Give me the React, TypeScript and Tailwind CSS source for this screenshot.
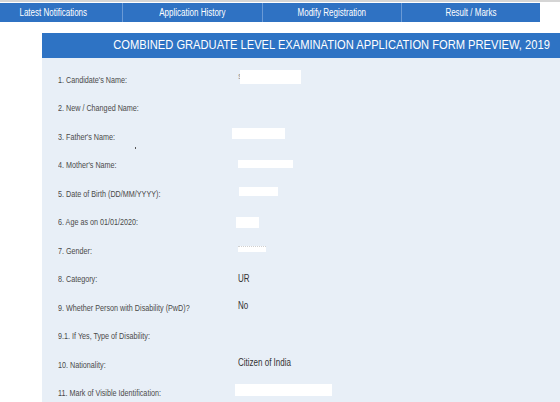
import type { ReactNode } from 'react';

const font = { fontFamily: '"Liberation Sans", Arial, sans-serif' };

const tabs = ['Latest Notifications', 'Application History', 'Modify Registration', 'Result / Marks'];

// The source page renders in a narrow face; squeeze Arial-width text to match.
function Narrow({ children, className = '' }: { children: ReactNode; className?: string }) {
  return <span className={`inline-block whitespace-nowrap scale-x-[0.8] ${className}`}>{children}</span>;
}

function Redacted({ className }: { className: string }) {
  return <span className={`block bg-white ${className}`} />;
}

function Value({ children, className = '' }: { children: ReactNode; className?: string }) {
  return <Narrow className={`origin-left text-[10px] text-[#333] ${className}`}>{children}</Narrow>;
}

const rows: { label: string; value?: ReactNode; extra?: ReactNode }[] = [
  {
    label: "1. Candidate's Name:",
    value: (
      <span className="flex items-center mb-[6px]">
        <span className="text-[8px] leading-none text-[#888]">S</span>
        <Redacted className="ml-[-3px] w-[61px] h-[14px]" />
      </span>
    ),
  },
  { label: '2. New / Changed Name:' },
  {
    label: "3. Father's Name:",
    value: <Redacted className="ml-[-6px] w-[53px] h-[11px] mb-[8px]" />,
    extra: <span className="absolute left-[77px] top-[24px] w-px h-[2px] bg-[#555]" />,
  },
  { label: "4. Mother's Name:", value: <Redacted className="w-[55px] h-[8px] mb-[4px]" /> },
  { label: '5. Date of Birth (DD/MM/YYYY):', value: <Redacted className="ml-px w-[39px] h-[9px] mb-[5px]" /> },
  { label: '6. Age as on 01/01/2020:', value: <Redacted className="ml-[-2px] w-[23px] h-[11px]" /> },
  {
    label: '7. Gender:',
    value: <Redacted className="w-[28px] h-[6px] mb-[4px] border-t border-[#d0d0d0] border-dotted" />,
  },
  { label: '8. Category:', value: <Value className="mb-[2px]">UR</Value> },
  { label: '9. Whether Person with Disability (PwD)?', value: <Value className="mb-[6px]">No</Value> },
  { label: '9.1. If Yes, Type of Disability:' },
  { label: '10. Nationality:', value: <Value className="mb-[6px]">Citizen of India</Value> },
  { label: '11. Mark of Visible Identification:', value: <Redacted className="ml-[-3px] w-[97px] h-[12px] mb-[8px]" /> },
];

export default function App() {
  return (
    <div className="w-[560px] h-[402px] overflow-hidden bg-white" style={font}>
      {/* top rule + nav */}
      <div className="h-[2px] bg-[#d5d5d5]" />
      <div className="h-px" />
      <div className="flex ml-[-16px] w-[556px] h-[19px] bg-[#2f72c3]">
        {tabs.map((t, i) => (
          <div
            key={t}
            className={`flex-1 flex items-center justify-center text-white text-[10px] ${i > 0 ? 'border-l border-[#6a9ad6]' : ''}`}
          >
            <Narrow>{t}</Narrow>
          </div>
        ))}
      </div>

      {/* preview panel */}
      <div className="ml-[42px] mt-[11px] w-[579px]">
        <div className="h-[25px] bg-[#2e73c4] flex items-center justify-center text-white text-[13.5px] overflow-hidden">
          <Narrow className="scale-x-[0.825]">COMBINED GRADUATE LEVEL EXAMINATION APPLICATION FORM PREVIEW, 2019</Narrow>
        </div>
        <div className="bg-[#e8eff7] pt-[8px] pl-[16px] h-[400px]">
          {rows.map((r) => (
            <div key={r.label} className="relative flex items-center h-[28.5px]">
              <div className="w-[180px] text-[9px] text-[#4a4a4a]">
                <Narrow className="origin-left">{r.label}</Narrow>
              </div>
              <div className="flex items-center">{r.value}</div>
              {r.extra}
            </div>
          ))}
        </div>
      </div>
    </div>
  );
}
